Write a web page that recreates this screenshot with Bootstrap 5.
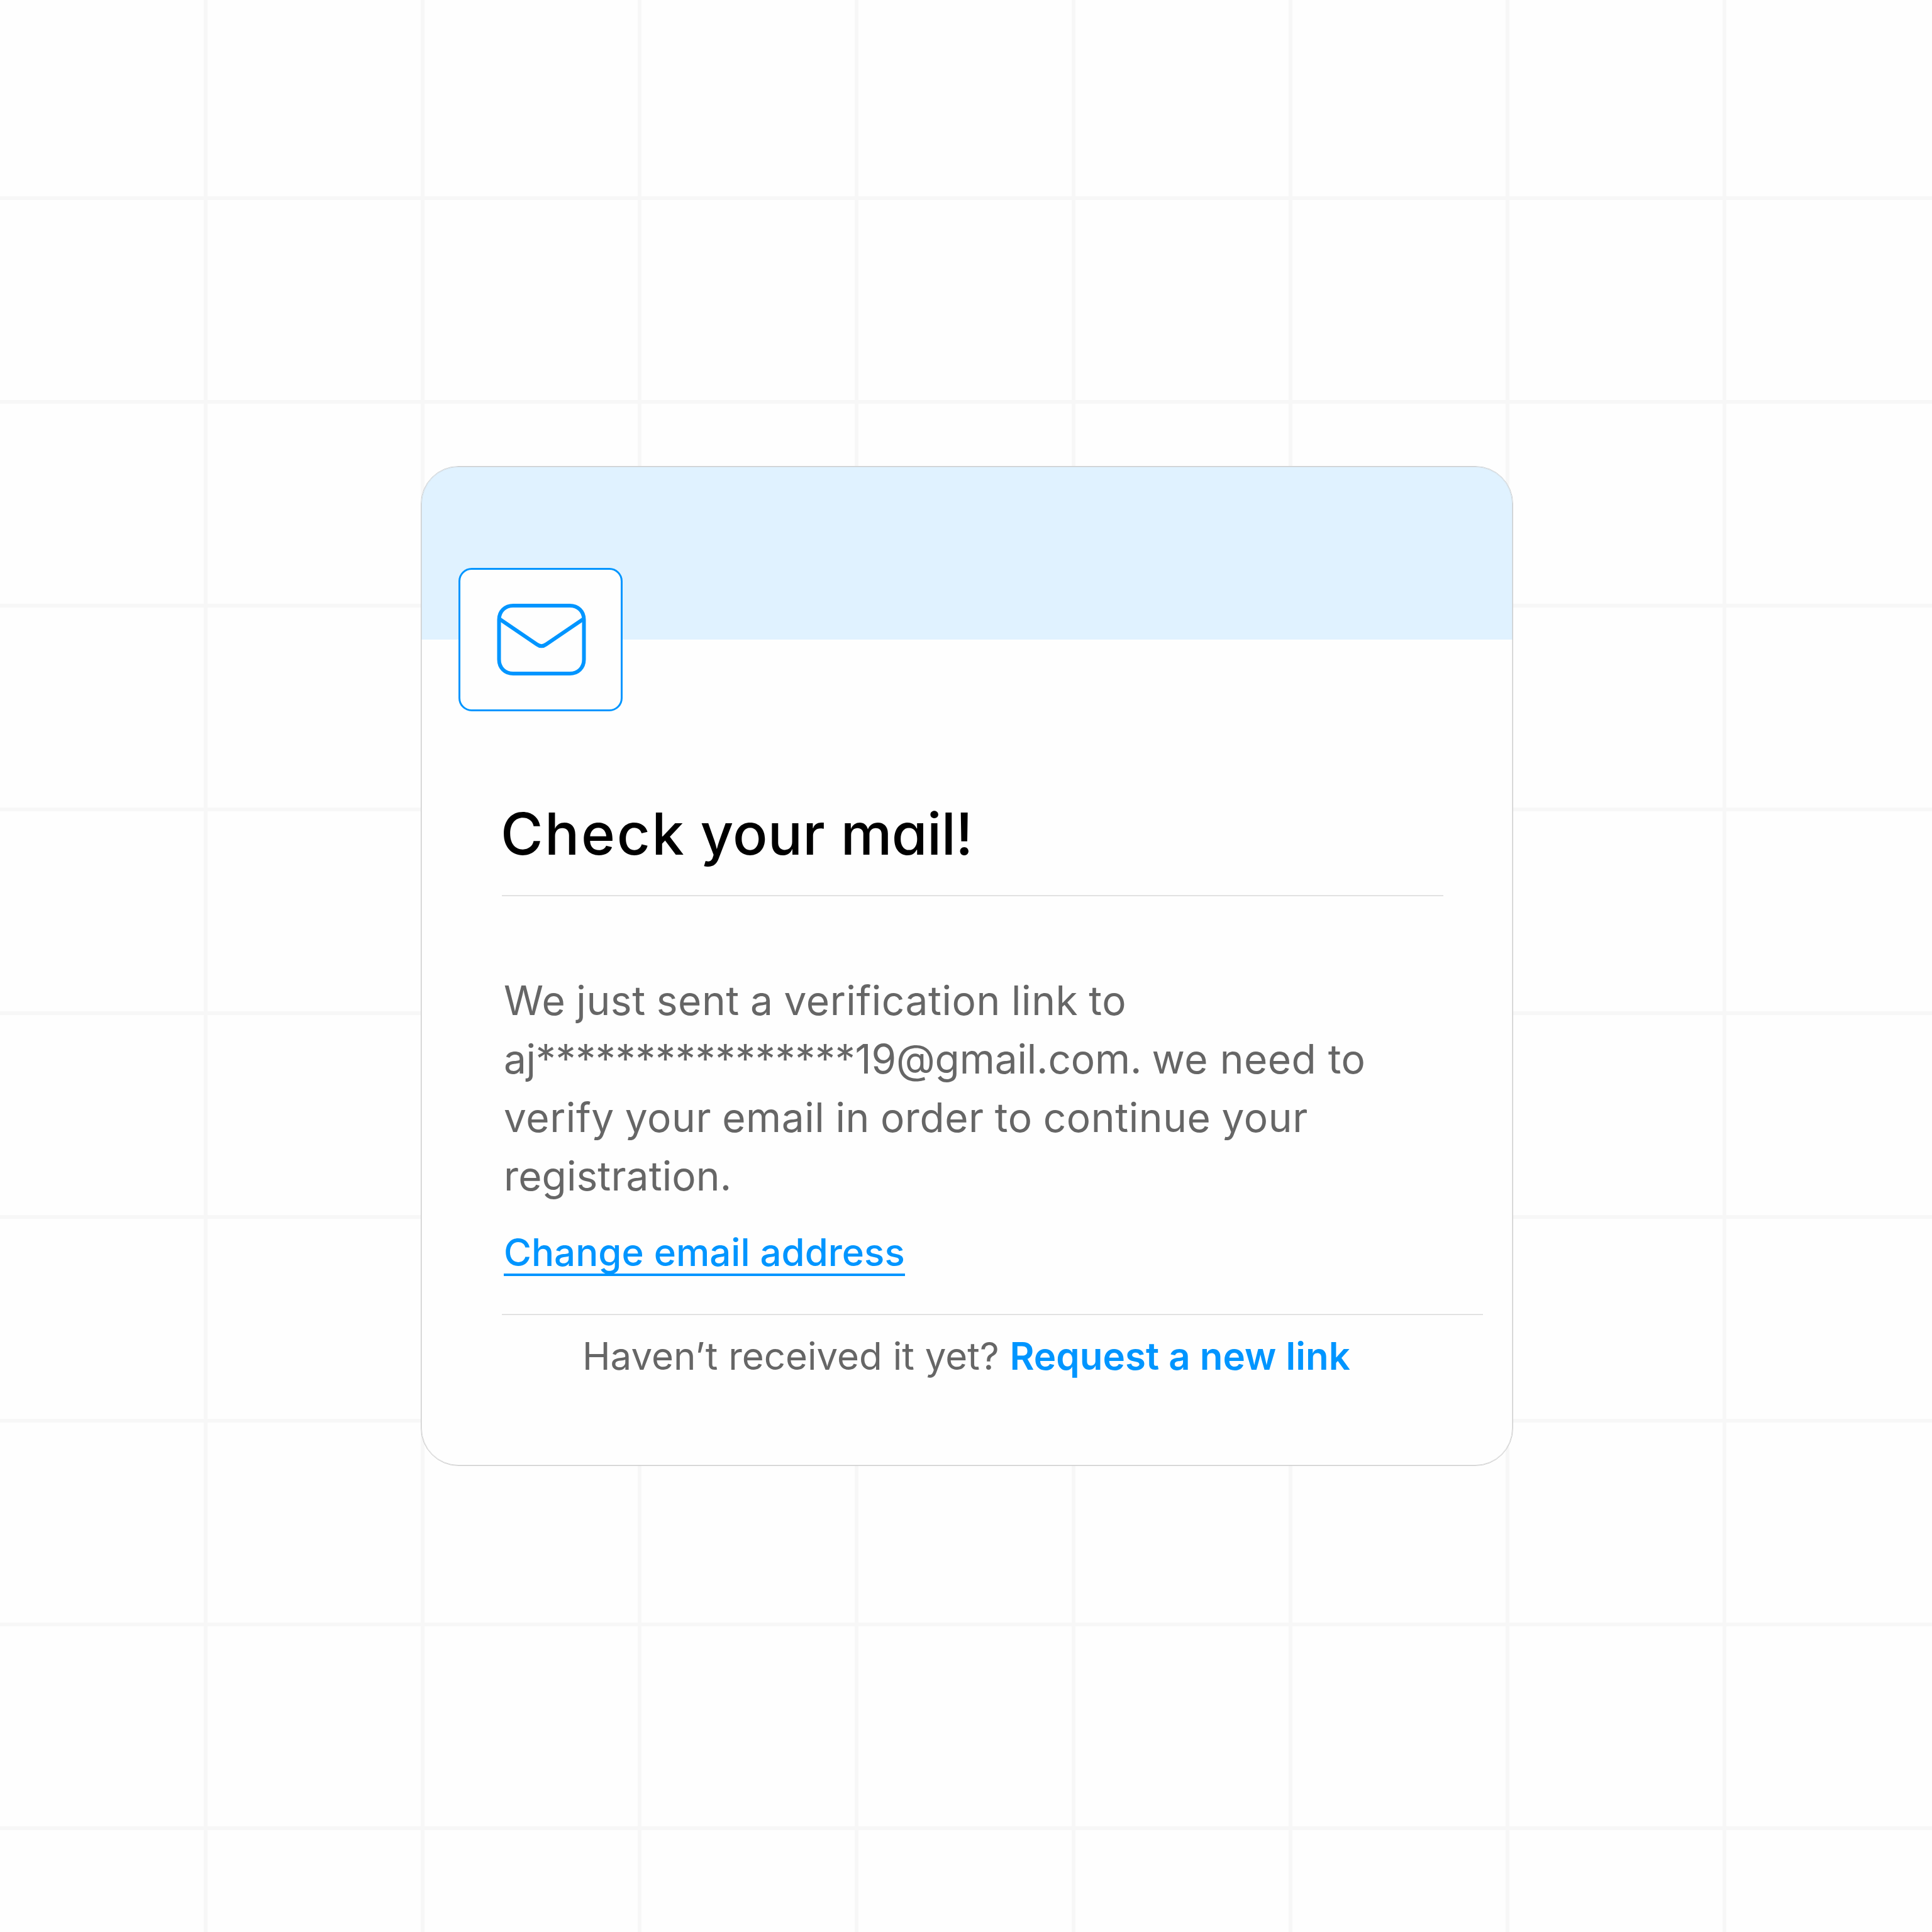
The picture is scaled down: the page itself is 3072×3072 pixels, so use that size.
<!DOCTYPE html>
<html lang="en">
<head>
    <meta charset="UTF-8">
    <meta name="viewport" content="width=device-width, initial-scale=1.0">
    <title>Check your mail</title>
    <link href="https://cdn.jsdelivr.net/npm/bootstrap@5.3.0/dist/css/bootstrap.min.css" rel="stylesheet">
    <style>
        body {
            font-family: Inter, "Liberation Sans", sans-serif;
            color: #666;
            background-color: #fefefe;
            /* grid lines, 345 x 324 cells */
            background-image:
                linear-gradient(to right, #f7f7f7 6px, transparent 6px),
                linear-gradient(to bottom, #f7f7f7 6px, transparent 6px);
            background-size: 345px 324px;
            background-position: 324px 312px;
        }
        .page { padding: 741px 0 0 669px; min-height: 3072px; }
        .verify-card {
            width: 1737px;
            height: 1590px;
            background: #fefefe;
            border: 1px solid #ccc;
            border-radius: 60px;
        }
        .verify-card::after {
            content: "";
            position: absolute;
            inset: 0;
            border: 1px solid rgba(204, 204, 204, .5);
            border-radius: 59px;
            pointer-events: none;
        }
        .verify-banner { height: 275px; background: #e0f2ff; }
        .mail-icon {
            width: 261px;
            height: 228px;
            margin: -114px 0 0 59px;
            background: #fefefe;
            border: 3px solid #0095ff;
            border-radius: 21px;
        }
        .verify-content { padding: 140px 47px 0 128px; }
        .verify-title {
            font-size: 92px;
            line-height: 110px;
            color: #000;
            font-feature-settings: "cv11";
            margin-left: -2px;
            white-space: nowrap;
        }
        .verify-title .t1 { letter-spacing: 2.6px; word-spacing: -4px; }
        .verify-title .t2 { letter-spacing: .2px; }
        .verify-title .t3 { letter-spacing: -.6px; }
        .rule { height: 2px; border-top: 1px solid #ebebeb; border-bottom: 1px solid #d9d9d9; }
        .rule-title { width: 1497px; margin-top: 42px; }
        .rule-footer { margin-top: 60px; }
        .verify-text {
            font-size: 64px;
            line-height: 93px;
            margin: 119px 0 0 3px;
            letter-spacing: .57px;
            word-spacing: -1.5px;
            white-space: nowrap;
        }
        .verify-text .user { letter-spacing: -.4px; }
        .verify-text .stars { letter-spacing: -.32px; }
        .verify-text .domain { letter-spacing: -.15px; }
        .verify-text .need { letter-spacing: .5px; word-spacing: 0; }
        .verify-text .last { letter-spacing: .1px; }
        .change-link {
            font-size: 60px;
            line-height: 60px;
            margin: 45px 0 0 3px;
            padding-bottom: 4px;
            border-bottom: 4px solid #0095ff;
        }
        .verify-link { color: #0095ff; }
        .resend { font-size: 60px; line-height: 72px; margin: 29px 0 0 128px; white-space: nowrap; }
    </style>
</head>
<body>
    <main class="page">
        <div class="card verify-card position-relative overflow-hidden">
            <div class="verify-banner"></div>
            <div class="mail-icon position-relative d-flex align-items-center justify-content-center">
                <svg width="144" height="120" viewBox="0 0 144 120" fill="none" stroke="#0095ff" stroke-width="6">
                    <path d="M28 6H118C131 6 140.500 15 140.500 28.500V91.500C140.500 105 131 114 118 114H28C15 114 5.500 105 5.500 91.500V28.500C5.500 15 15 6 28 6Z"/>
                    <path d="M6 27L65.500 67.500Q73 73 80.500 67.500L140 27"/>
                </svg>
            </div>
            <div class="verify-content">
                <h1 class="verify-title fw-medium mb-0"><span class="t1">Check </span><span class="t2">your </span><span class="t3">mail!</span></h1>
                <div class="rule rule-title"></div>
                <p class="verify-text">
                    We just sent a verification link to<br>
                    <span class="user">aj</span><span class="stars">****************</span><span class="domain">19@gmail.com. </span><span class="need">we need to</span><br>
                    verify your email in order to continue your<br>
                    <span class="last">registration.</span>
                </p>
                <div class="d-flex">
                    <a href="#" class="change-link verify-link fw-medium text-decoration-none">Change email address</a>
                </div>
                <div class="rule rule-footer"></div>
                <p class="resend mb-0">Haven’t received it yet? <a href="#" class="verify-link fw-semibold text-decoration-none">Request a new link</a></p>
            </div>
        </div>
    </main>
    <script src="https://cdn.jsdelivr.net/npm/bootstrap@5.3.0/dist/js/bootstrap.bundle.min.js"></script>
</body>
</html>
